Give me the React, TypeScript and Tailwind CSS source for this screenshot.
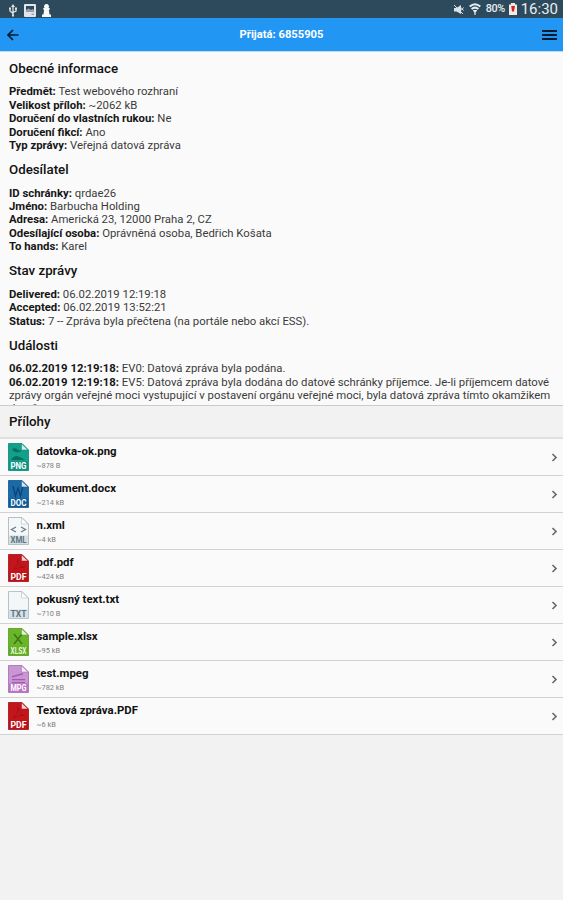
import type { ReactNode } from 'react';

type FileKind = 'png' | 'doc' | 'xml' | 'pdf' | 'txt' | 'xlsx' | 'mpg';

interface Attachment {
  name: string;
  size: string;
  kind: FileKind;
}

interface Detail {
  label: string;
  value: string;
}

const general: Detail[] = [
  { label: 'Předmět:', value: 'Test webového rozhraní' },
  { label: 'Velikost příloh:', value: '~2062 kB' },
  { label: 'Doručení do vlastních rukou:', value: 'Ne' },
  { label: 'Doručení fikcí:', value: 'Ano' },
  { label: 'Typ zprávy:', value: 'Veřejná datová zpráva' },
];

const sender: Detail[] = [
  { label: 'ID schránky:', value: 'qrdae26' },
  { label: 'Jméno:', value: 'Barbucha Holding' },
  { label: 'Adresa:', value: 'Americká 23, 12000 Praha 2, CZ' },
  { label: 'Odesílající osoba:', value: 'Oprávněná osoba, Bedřich Košata' },
  { label: 'To hands:', value: 'Karel' },
];

const state: Detail[] = [
  { label: 'Delivered:', value: '06.02.2019 12:19:18' },
  { label: 'Accepted:', value: '06.02.2019 13:52:21' },
  { label: 'Status:', value: '7 -- Zpráva byla přečtena (na portále nebo akcí ESS).' },
];

const events: Detail[] = [
  { label: '06.02.2019 12:19:18:', value: 'EV0: Datová zpráva byla podána.' },
  {
    label: '06.02.2019 12:19:18:',
    value:
      'EV5: Datová zpráva byla dodána do datové schránky příjemce. Je-li příjemcem datové zprávy orgán veřejné moci vystupující v postavení orgánu veřejné moci, byla datová zpráva tímto okamžikem doručena.',
  },
];

const attachments: Attachment[] = [
  { name: 'datovka-ok.png', size: '~878 B', kind: 'png' },
  { name: 'dokument.docx', size: '~214 kB', kind: 'doc' },
  { name: 'n.xml', size: '~4 kB', kind: 'xml' },
  { name: 'pdf.pdf', size: '~424 kB', kind: 'pdf' },
  { name: 'pokusný text.txt', size: '~710 B', kind: 'txt' },
  { name: 'sample.xlsx', size: '~95 kB', kind: 'xlsx' },
  { name: 'test.mpeg', size: '~782 kB', kind: 'mpg' },
  { name: 'Textová zpráva.PDF', size: '~6 kB', kind: 'pdf' },
];

const fileStyles: Record<FileKind, { fill: string; band: string; edge: string; text: string; label: string; art: ReactNode }> = {
  png: {
    fill: '#12a08c',
    band: '#0d9682',
    edge: '#0d8573',
    text: '#ffffff',
    label: 'PNG',
    art: <path d="M3 17q2-4 6-4 4 1 8 4zM4 6q4-2 6 1l4 1-4 1.500q-4 0-6-3.500z" fill="#08705f" />,
  },
  doc: {
    fill: '#1a6aa8',
    band: '#0d5a98',
    edge: '#10548c',
    text: '#ffffff',
    label: 'DOC',
    art: <path d="M5 6l2.500 10L10 8l2.500 8L15 6" fill="none" stroke="#0d4577" strokeWidth="1.400" />,
  },
  xml: {
    fill: '#f4f7f8',
    band: '#d5dfe4',
    edge: '#a3b1b8',
    text: '#5c7482',
    label: 'XML',
    art: <path d="M8 10l-4.500 2.500L8 15M13 10l4.500 2.500L13 15" fill="none" stroke="#6d7d86" strokeWidth="1.300" />,
  },
  pdf: {
    fill: '#c3161c',
    band: '#bd1118',
    edge: '#a50f14',
    text: '#ffffff',
    label: 'PDF',
    art: <path d="M5 16q5-4 5-11 1 8 7 8-7 0-12 3" fill="none" stroke="#ab1016" strokeWidth="1" />,
  },
  txt: {
    fill: '#f4f7f8',
    band: '#d5e1e7',
    edge: '#a3b5be',
    text: '#5c7482',
    label: 'TXT',
    art: null,
  },
  xlsx: {
    fill: '#6bb52b',
    band: '#5fab22',
    edge: '#579a1e',
    text: '#e9f7d8',
    label: 'XLSX',
    art: <path d="M6 6l8 10M14 6L6 16" fill="none" stroke="#3f7d14" strokeWidth="1.700" />,
  },
  mpg: {
    fill: '#c995d2',
    band: '#b974c5',
    edge: '#a468b0',
    text: '#ffffff',
    label: 'MPG',
    art: <path d="M4 11l11-3v1.500L4 12.500zM4 14h13v1.300H4zM4 17h13v1.300H4z" fill="#a15bae" />,
  },
};

const FileIcon = ({ kind }: { kind: FileKind }) => {
  const s = fileStyles[kind];
  return (
    <svg className="h-7 w-[21px] shrink-0" viewBox="0 0 21 28">
      <path d="M.5.5h13.500l6.500 6.500v20.500H.5z" fill={s.fill} stroke={s.edge} strokeWidth=".8" />
      {s.art}
      <path d="M1 18.500h19V27H1z" fill={s.band} />
      <path d="M13.500.8v6.200h6.500z" fill="#ffffff" fillOpacity=".82" stroke={s.edge} strokeWidth=".5" />
      <text
        x="10.500"
        y="26"
        textAnchor="middle"
        textLength="16"
        lengthAdjust="spacingAndGlyphs"
        fill={s.text}
        fontSize="8.400"
        fontWeight="700"
      >
        {s.label}
      </text>
    </svg>
  );
};

const StatusBar = () => (
  <div className="flex h-[18px] shrink-0 items-center justify-between bg-[#2d4a5d] pl-2 pr-[5px] text-[#e8edf0]">
    <div className="flex items-center gap-[6px] pt-[2px]">
      <svg className="h-[13px] w-[10px]" viewBox="0 0 10 13" fill="none" stroke="#dbe3e7" strokeWidth="1.300">
        <path d="M5 2v10M2 4.500v2.500l3 2.500M8 4v3L5 8.500" />
        <path d="M5 0l2 3H3zM1 3.500h2v2H1zM7 3.500h2v2H7zM4 10.500h2v2H4z" fill="#dbe3e7" stroke="none" />
      </svg>
      <svg className="h-[13px] w-3" viewBox="0 0 12 13">
        <rect width="12" height="13" rx="1" fill="#e3e3ea" />
        <path d="M2 2h8v5.500H2z" fill="#2d4a5d" />
        <path d="M2 7.500V6l2.500-1.500L7 6l1.500-1L10 6v1.500zM7.500 9.500H10V11H7.500z" fill="#98a4b4" />
      </svg>
      <svg className="h-[13px] w-[9px]" viewBox="0 0 9 13" fill="#f6f9f8">
        <path d="M4.500 0a2.500 2.500 0 0 1 2 4h1.200v1.500L6.900 6l.6 4.500H9V13H0v-2.500h1.500L2.100 6l-.8-.5V4h1.200a2.500 2.500 0 0 1 2-4z" />
      </svg>
    </div>
    <div className="flex items-center">
      <svg className="mr-[5px] h-[11px] w-[11px]" viewBox="0 0 11 11">
        <path d="M1 4h2.500L8 1v9L3.500 7.500H1z" fill="#dbe3e7" />
        <path d="M1 1l9 9M8 3.500l2.500 3M10.500 3.500L8 6.500" stroke="#dbe3e7" strokeWidth="1" />
      </svg>
      <svg className="mr-[5px] h-3 w-3" viewBox="0 0 12 12" fill="none" stroke="#e8edf0" strokeWidth="2">
        <path d="M.7 3.500q5.300-4.500 10.600 0M2.600 6q3.400-2.800 6.800 0" />
        <path d="M3.800 7h4.400L6.600 9.800v2.200H5.400V9.800z" fill="#e8edf0" stroke="none" />
      </svg>
      <span className="w-[23px] whitespace-nowrap text-[10.800px] font-medium tracking-[-0.3px]">80%</span>
      <svg className="mr-1 h-3 w-2" viewBox="0 0 8 12">
        <path d="M2 0h4v1.500h2V12H0V1.500h2z" fill="#f2ece9" />
        <path d="M2.200 3h3.800L5 8.500H3z" fill="#d3241b" />
      </svg>
      <span className="text-[15px] leading-[18px]">16:30</span>
    </div>
  </div>
);

const Toolbar = () => (
  <header className="flex h-[34px] shrink-0 items-center justify-between border-b border-[#bcdcf5] bg-[#2196f3] pl-[7px] pr-[6px]">
    <svg className="h-3 w-[15px]" viewBox="0 0 15 12" fill="none" stroke="#0a1c2c" strokeWidth="1.700">
      <path d="M6 1L1 6l5 5M1 6h10.500" />
    </svg>
    <h1 className="pt-[2px] text-[11.200px] font-bold text-white">Přijatá: 6855905</h1>
    <svg className="h-3 w-[16px]" viewBox="0 0 16 12" fill="#07192a">
      <path d="M1 1h15v2H1zM1 5h15v2H1zM1 9h15v2H1z" />
    </svg>
  </header>
);

const Section = ({ title, items }: { title: string; items: Detail[] }) => (
  <section className="mb-[9.800px]">
    <h2 className="mb-[8.400px] text-[13.300px] font-medium leading-4 text-[#111]">{title}</h2>
    {items.map((item, i) => (
      <p key={i} className="leading-[13.400px]">
        <b className="font-bold text-[#161616]">{item.label}</b> {item.value}
      </p>
    ))}
  </section>
);

const AttachmentRow = ({ file }: { file: Attachment }) => (
  <li className="flex h-[37px] items-center border-b border-[#d2d2d2] bg-[#fafafa] pl-2 pr-[5px]">
    <FileIcon kind={file.kind} />
    <div className="ml-[7.500px] flex-1 pt-[2px]">
      <div className="text-[11.400px] font-bold leading-[14px] text-[#111]">{file.name}</div>
      <div className="mt-[2px] text-[7.400px] leading-[12px] text-[#808080]">{file.size}</div>
    </div>
    <svg className="h-[9px] w-[7px]" viewBox="0 0 7 9" fill="none" stroke="#6c6c6c" strokeWidth="1.700">
      <path d="M1.500 1l3.500 3.500L1.500 8" />
    </svg>
  </li>
);

export default function App() {
  return (
    <div className="flex h-[900px] w-[563px] flex-col overflow-hidden bg-[#f2f2f2] font-[Roboto,sans-serif] text-[#3a3a3a]">
      <StatusBar />
      <Toolbar />
      <main className="h-[353px] shrink-0 overflow-hidden bg-[#fafafa] px-[9px] pt-[9px] text-[11.330px]">
        <Section title="Obecné informace" items={general} />
        <Section title="Odesílatel" items={sender} />
        <Section title="Stav zprávy" items={state} />
        <Section title="Události" items={events} />
      </main>
      <div className="flex h-[34px] shrink-0 items-center border-b-2 border-t border-b-[#e0e0e0] border-t-[#cbcbcb] px-[9px]">
        <h2 className="text-[13.300px] font-medium text-[#111]">Přílohy</h2>
      </div>
      <ul>
        {attachments.map((file) => (
          <AttachmentRow key={file.name} file={file} />
        ))}
      </ul>
    </div>
  );
}
